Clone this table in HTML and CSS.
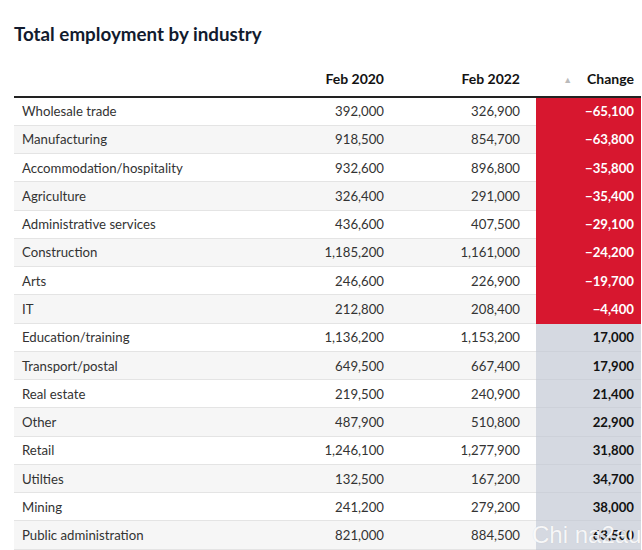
FILE: index.html
```html
<!DOCTYPE html>
<html>
<head>
<meta charset="utf-8">
<link rel="stylesheet" href="styles.css">
</head>
<body>
<div class="page">
  <h1 class="title">Total employment by industry</h1>
  <table class="tbl">
    <colgroup>
      <col class="w-name"><col class="w-a"><col class="w-b"><col class="w-chg">
    </colgroup>
    <thead>
      <tr>
        <th class="c-name"></th>
        <th class="c-a">Feb 2020</th>
        <th class="c-b">Feb 2022</th>
        <th class="c-chg"><span class="sort">▲</span>Change</th>
      </tr>
    </thead>
    <tbody>
      <tr><td class="c-name">Wholesale trade</td><td class="c-a">392,000</td><td class="c-b">326,900</td><td class="c-chg neg">−65,100</td></tr>
      <tr><td class="c-name">Manufacturing</td><td class="c-a">918,500</td><td class="c-b">854,700</td><td class="c-chg neg">−63,800</td></tr>
      <tr><td class="c-name">Accommodation/hospitality</td><td class="c-a">932,600</td><td class="c-b">896,800</td><td class="c-chg neg">−35,800</td></tr>
      <tr><td class="c-name">Agriculture</td><td class="c-a">326,400</td><td class="c-b">291,000</td><td class="c-chg neg">−35,400</td></tr>
      <tr><td class="c-name">Administrative services</td><td class="c-a">436,600</td><td class="c-b">407,500</td><td class="c-chg neg">−29,100</td></tr>
      <tr><td class="c-name">Construction</td><td class="c-a">1,185,200</td><td class="c-b">1,161,000</td><td class="c-chg neg">−24,200</td></tr>
      <tr><td class="c-name">Arts</td><td class="c-a">246,600</td><td class="c-b">226,900</td><td class="c-chg neg">−19,700</td></tr>
      <tr><td class="c-name">IT</td><td class="c-a">212,800</td><td class="c-b">208,400</td><td class="c-chg neg">−4,400</td></tr>
      <tr><td class="c-name">Education/training</td><td class="c-a">1,136,200</td><td class="c-b">1,153,200</td><td class="c-chg pos">17,000</td></tr>
      <tr><td class="c-name">Transport/postal</td><td class="c-a">649,500</td><td class="c-b">667,400</td><td class="c-chg pos">17,900</td></tr>
      <tr><td class="c-name">Real estate</td><td class="c-a">219,500</td><td class="c-b">240,900</td><td class="c-chg pos">21,400</td></tr>
      <tr><td class="c-name">Other</td><td class="c-a">487,900</td><td class="c-b">510,800</td><td class="c-chg pos">22,900</td></tr>
      <tr><td class="c-name">Retail</td><td class="c-a">1,246,100</td><td class="c-b">1,277,900</td><td class="c-chg pos">31,800</td></tr>
      <tr><td class="c-name">Utilties</td><td class="c-a">132,500</td><td class="c-b">167,200</td><td class="c-chg pos">34,700</td></tr>
      <tr><td class="c-name">Mining</td><td class="c-a">241,200</td><td class="c-b">279,200</td><td class="c-chg pos">38,000</td></tr>
      <tr><td class="c-name">Public administration</td><td class="c-a">821,000</td><td class="c-b">884,500</td><td class="c-chg pos">63,500</td></tr>
    </tbody>
  </table>
  <div class="watermark">Chi na2au</div>
</div>
</body>
</html>
```
FILE: styles.css
```css
html, body {
  margin: 0;
  padding: 0;
  background: #fff;
}
body {
  font-family: Lato, "Open Sans", sans-serif;
  color: #333;
  overflow: hidden;
}
.page {
  position: relative;
  padding: 0 1px 0 14px;
}
.title {
  margin: 0;
  padding-top: 22px;
  height: 40px;
  font-size: 18.8px;
  line-height: 24px;
  font-weight: 700;
  color: #121b2e;
}
.tbl {
  width: 627px;
  border-collapse: collapse;
  table-layout: fixed;
  font-size: 13.2px;
}
.w-name { width: 242px; }
.w-a { width: 136px; }
.w-b { width: 144px; }
.w-chg { width: 105px; }
.tbl th,
.tbl td {
  box-sizing: border-box;
  padding: 0;
}
.tbl th {
  height: 35px;
  padding-bottom: 2px;
  font-size: 14px;
  font-weight: 700;
  color: #121212;
  text-align: right;
  border-bottom: 2px solid #222;
  vertical-align: middle;
}
.tbl td {
  height: 28.27px;
  border-bottom: 1px solid #e4e4e4;
  vertical-align: middle;
  line-height: 18px;
}
.tbl tbody tr:nth-child(even) td {
  background: #f6f6f6;
}
.c-name {
  text-align: left;
  padding-left: 8px !important;
}
.c-a {
  text-align: right;
  padding-right: 8px !important;
}
.c-b {
  text-align: right;
  padding-right: 16px !important;
}
.c-chg {
  text-align: right;
  padding-right: 7px !important;
}
.tbl td.neg {
  background: #d7172f !important;
  color: #fff;
  font-weight: 700;
  border-bottom-color: #d7172f;
}
.tbl td.pos {
  background: #d5d9e1 !important;
  color: #121212;
  font-weight: 700;
  border-bottom-color: #cdd1d9;
}
.sort {
  font-size: 9px;
  color: #bbb;
  margin-right: 15px;
  vertical-align: 1px;
}
.watermark {
  position: absolute;
  left: 532px;
  top: 521px;
  font-family: "Liberation Sans", sans-serif;
  font-size: 24px;
  line-height: 28px;
  color: rgba(255, 255, 255, 0.88);
  text-shadow: 0 0 1px rgba(0,0,0,0.12);
  white-space: nowrap;
}
```
